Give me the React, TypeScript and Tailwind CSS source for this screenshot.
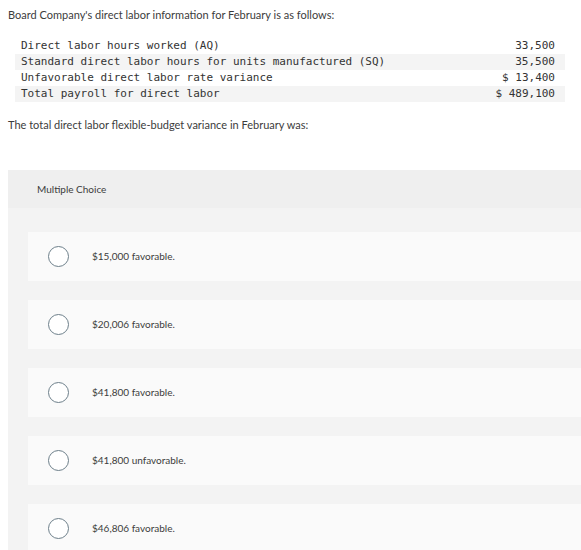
const rows = [
  { label: "Direct labor hours worked (AQ)", value: "33,500" },
  { label: "Standard direct labor hours for units manufactured (SQ)", value: "35,500" },
  { label: "Unfavorable direct labor rate variance", value: "$ 13,400" },
  { label: "Total payroll for direct labor", value: "$ 489,100" },
];

const choices = [
  "$15,000 favorable.",
  "$20,006 favorable.",
  "$41,800 favorable.",
  "$41,800 unfavorable.",
  "$46,806 favorable.",
];

export default function App() {
  return (
    <div className="h-[550px] overflow-hidden bg-white text-[#3c3c3c] font-['Lato','Liberation_Sans',sans-serif]">
      <p className="pl-2 pt-[8px] text-[11px] leading-[14px]">
        Board Company's direct labor information for February is as follows:
      </p>

      <table className="mt-[16px] ml-[15px] w-[550px] border-collapse font-['DejaVu_Sans_Mono',monospace] text-[11px] text-[#333]">
        <tbody>
          {rows.map((r, i) => (
            <tr key={r.label} className={i % 2 === 1 ? "bg-[#f4f4f4]" : ""}>
              <td className="h-4 pl-[6px] leading-4 whitespace-pre">{r.label}</td>
              <td className="h-4 pr-[10px] text-right leading-4 whitespace-pre">{r.value}</td>
            </tr>
          ))}
        </tbody>
      </table>

      <p className="pl-2 pt-[16px] text-[11px] leading-[14px]">
        The total direct labor flexible-budget variance in February was:
      </p>

      <div className="mt-[38px] ml-2 bg-[#f3f3f3]">
        <div className="flex h-[38px] items-center bg-[#efefef] pl-[29px] text-[10px]">
          Multiple Choice
        </div>
        <div className="flex flex-col gap-[19px] pt-[24px] pl-5">
          {choices.map((c) => (
            <div key={c} className="flex h-[49px] items-center bg-[#fafafa] pl-[20px]">
              <span className="h-[21px] w-[21px] shrink-0 rounded-full border-[1.5px] border-[#6d7f8a] bg-white" />
              <span className="ml-[23px] text-[10px]">{c}</span>
            </div>
          ))}
        </div>
      </div>
    </div>
  );
}
